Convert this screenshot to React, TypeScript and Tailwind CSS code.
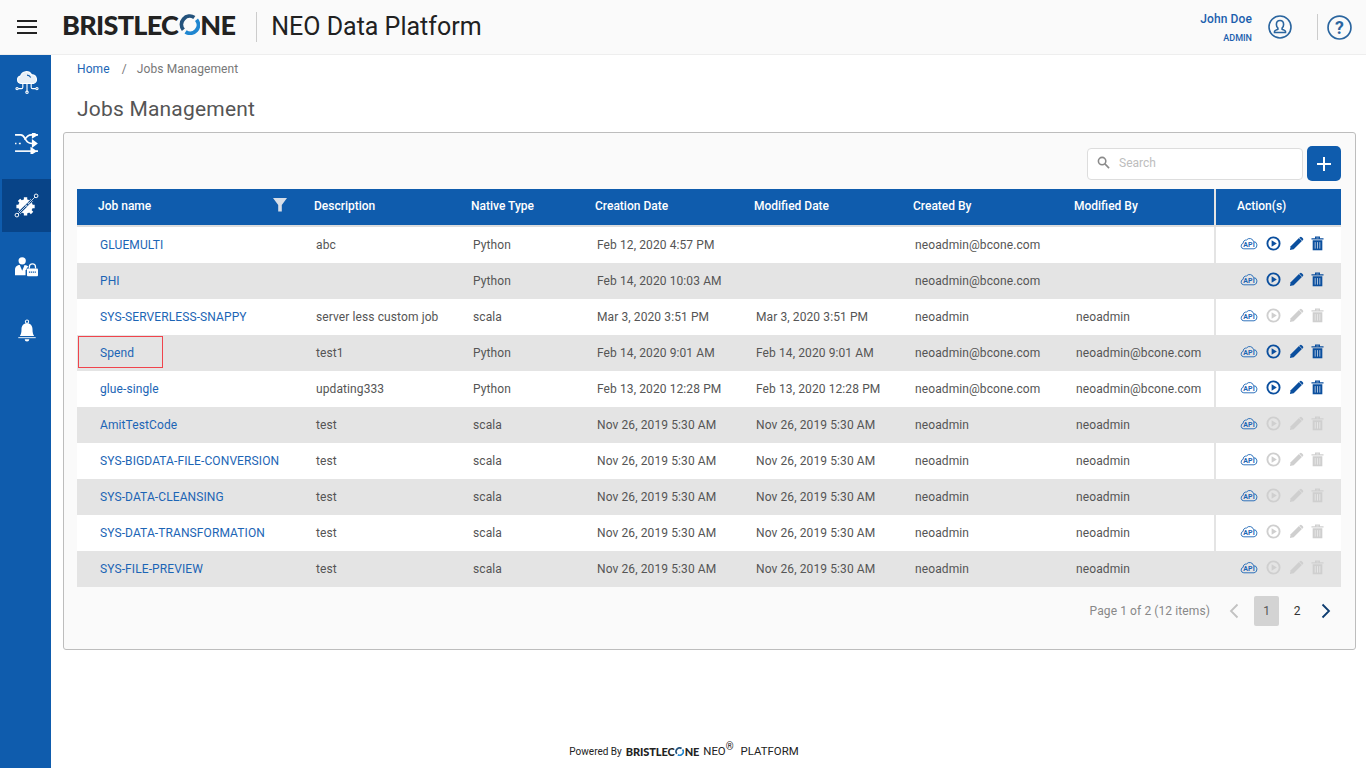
import * as React from 'react'

type Job = {
    name: string
    description: string
    type: string
    created: string
    modified: string
    createdBy: string
    modifiedBy: string
    enabled: boolean
}

const jobs: Job[] = [
    { name: 'GLUEMULTI', description: 'abc', type: 'Python', created: 'Feb 12, 2020 4:57 PM', modified: '', createdBy: 'neoadmin@bcone.com', modifiedBy: '', enabled: true },
    { name: 'PHI', description: '', type: 'Python', created: 'Feb 14, 2020 10:03 AM', modified: '', createdBy: 'neoadmin@bcone.com', modifiedBy: '', enabled: true },
    { name: 'SYS-SERVERLESS-SNAPPY', description: 'server less custom job', type: 'scala', created: 'Mar 3, 2020 3:51 PM', modified: 'Mar 3, 2020 3:51 PM', createdBy: 'neoadmin', modifiedBy: 'neoadmin', enabled: false },
    { name: 'Spend', description: 'test1', type: 'Python', created: 'Feb 14, 2020 9:01 AM', modified: 'Feb 14, 2020 9:01 AM', createdBy: 'neoadmin@bcone.com', modifiedBy: 'neoadmin@bcone.com', enabled: true },
    { name: 'glue-single', description: 'updating333', type: 'Python', created: 'Feb 13, 2020 12:28 PM', modified: 'Feb 13, 2020 12:28 PM', createdBy: 'neoadmin@bcone.com', modifiedBy: 'neoadmin@bcone.com', enabled: true },
    { name: 'AmitTestCode', description: 'test', type: 'scala', created: 'Nov 26, 2019 5:30 AM', modified: 'Nov 26, 2019 5:30 AM', createdBy: 'neoadmin', modifiedBy: 'neoadmin', enabled: false },
    { name: 'SYS-BIGDATA-FILE-CONVERSION', description: 'test', type: 'scala', created: 'Nov 26, 2019 5:30 AM', modified: 'Nov 26, 2019 5:30 AM', createdBy: 'neoadmin', modifiedBy: 'neoadmin', enabled: false },
    { name: 'SYS-DATA-CLEANSING', description: 'test', type: 'scala', created: 'Nov 26, 2019 5:30 AM', modified: 'Nov 26, 2019 5:30 AM', createdBy: 'neoadmin', modifiedBy: 'neoadmin', enabled: false },
    { name: 'SYS-DATA-TRANSFORMATION', description: 'test', type: 'scala', created: 'Nov 26, 2019 5:30 AM', modified: 'Nov 26, 2019 5:30 AM', createdBy: 'neoadmin', modifiedBy: 'neoadmin', enabled: false },
    { name: 'SYS-FILE-PREVIEW', description: 'test', type: 'scala', created: 'Nov 26, 2019 5:30 AM', modified: 'Nov 26, 2019 5:30 AM', createdBy: 'neoadmin', modifiedBy: 'neoadmin', enabled: false },
]

const gridCols = 'grid grid-cols-[216px_157px_124px_159px_159px_161px_161px_127px]'

const Logo: React.FC<{ small?: boolean }> = ({ small }) => (
    <span
        className={
            small
                ? "inline-flex items-center [font-family:Lato,sans-serif] font-black text-[11px] leading-none text-[#222] tracking-[-0.1px]"
                : "inline-flex items-center pb-[6px] [font-family:Lato,sans-serif] font-black text-[27px] leading-none text-[#222] tracking-[-0.7px]"
        }
    >
        BRISTLEC
        <svg viewBox="0 0 24 24" className={small ? 'w-[9px] h-[9px] mx-[0.5px]' : 'w-[21px] h-[21px] mx-[0.5px]'}>
            <path d="M5 18A9.500 9.500 0 0 1 17.500 4" fill="none" stroke="#23527c" strokeWidth="4.400" />
            <path d="M20 6.500A9.500 9.500 0 0 1 7.500 20.500" fill="none" stroke="#1f86d0" strokeWidth="4.400" />
        </svg>
        NE
    </span>
)

const CloudIcon = () => (
    <svg viewBox="0 0 28 28" className="w-[26px] h-[26px]" fill="none" stroke="#fff" strokeWidth="1.200">
        <path d="M7.500 14.500a4 4 0 0 1-.5-7.900A6.500 6.500 0 0 1 19 5.200a4.800 4.800 0 0 1 2 9.300z" fill="#fff" fillOpacity="0.9" />
        <path d="M14 5.500a4.500 4.500 0 0 1 4 2.500" stroke="#0f5cad" />
        <path d="M9.500 15v3.500a1.500 1.500 0 0 1-1.500 1.500H4.500M14 15v7.500M18.500 15v3.500A1.500 1.500 0 0 0 20 20h3.500" />
        <circle cx="3.300" cy="20" r="1.200" />
        <circle cx="14" cy="24" r="1.300" />
        <circle cx="24.700" cy="20" r="1.200" />
    </svg>
)

const ShuffleIcon = () => (
    <svg viewBox="0 0 24 22" className="w-[23px] h-[21px]" fill="none" stroke="#fff" strokeWidth="1.700">
        <path d="M0 2h6c3 0 4 3 5.500 5.500S15 11 18 11h2" />
        <path d="M18.500 8l4 3-4 3z" fill="#fff" />
        <path d="M10 7c2-3 3.500-5 7-5h2" />
        <path d="M18.500 -.5l4 2.500-4 2.500z" fill="#fff" />
        <path d="M0 11h1.500M4 11h2M21.500 19H24M22 2h2" />
        <path d="M0 19h18" />
        <path d="M17 16l4.500 3-4.500 3z" fill="#fff" />
    </svg>
)

const GearIcon = () => (
    <svg viewBox="0 0 26 26" className="w-[25px] h-[25px]">
        <circle cx="12" cy="14" r="7.500" fill="#fff" />
        <path d="M12 4.500v4M12 19.500v4M2.500 14h4M17.500 14h4M5.200 7.200l3 3M15.800 17.800l3 3M18.800 7.200l-3 3M8.200 17.800l-3 3" stroke="#fff" strokeWidth="3.500" />
        <path d="M4 22L22 4" stroke="#084488" strokeWidth="2.800" />
        <path d="M4 22L22 4" stroke="#dfe8f3" strokeWidth="0.900" />
        <circle cx="23" cy="3" r="1.900" fill="#084488" stroke="#fff" strokeWidth="1" />
        <circle cx="14" cy="12" r="1.800" fill="#084488" stroke="#fff" strokeWidth="1" />
        <circle cx="3" cy="23" r="1.900" fill="#084488" stroke="#fff" strokeWidth="1" />
    </svg>
)

const UserLockIcon = () => (
    <svg viewBox="0 0 26 24" className="w-[25px] h-[23px]" fill="#fff">
        <circle cx="8.500" cy="5" r="3.800" />
        <path d="M1 20v-5.500C1 11 3.500 9.700 6 9.500l2.500 6 2.500-6c1.500.1 3 .6 4 1.700-1.300.7-2 1.800-2.200 3.300H12V20z" />
        <path d="M16 13v-1.500a3.200 3.200 0 0 1 6.400 0V13" fill="none" stroke="#fff" strokeWidth="1.300" />
        <rect x="13.500" y="13" width="11.500" height="8" rx="1" />
        <path d="M15.500 16.800h7.500" stroke="#0f5cad" strokeWidth="1.200" strokeDasharray="1.300 .7" />
    </svg>
)

const BellIcon = () => (
    <svg viewBox="0 0 24 26" className="w-[22px] h-[24px]" fill="#fff">
        <circle cx="12" cy="2.800" r="1.800" fill="none" stroke="#fff" strokeWidth="1.100" />
        <path d="M12 4.500c-4 0-6 3-6 6.500 0 3.500-.6 5.500-1.800 7.500h15.600C18.600 16.500 18 14.500 18 11c0-3.500-2-6.500-6-6.500z" />
        <path d="M2.500 19.800h19v1h-19z" />
        <path d="M9.500 22h5a2.500 2.500 0 0 1-5 0z" />
    </svg>
)

const SideItem: React.FC<{ active?: boolean; children: React.ReactNode }> = ({ active, children }) => (
    <div className={`h-[53px] ml-[2px] flex items-center justify-center ${active ? 'bg-[#084488]' : ''}`}>
        {children}
    </div>
)

const ApiIcon = () => (
    <svg viewBox="0 0 18 14" className="w-[18px] h-[14px]" fill="none" stroke="#1c65b5" strokeWidth="0.900">
        <path d="M3.800 12.800a2.800 2.800 0 0 1-.6-5.500 3 3 0 0 1 3.300-3.300A4 4 0 0 1 13.500 5.500a3.700 3.700 0 0 1 .6 7.300z" />
        <text x="9" y="11" textAnchor="middle" fontSize="7" fontWeight="700" fill="#1c65b5" stroke="none" fontFamily="Roboto, sans-serif">API</text>
    </svg>
)

const ActionIcons: React.FC<{ enabled: boolean }> = ({ enabled }) => {
    const color = enabled ? '#0b4f9e' : '#cfcfcf'
    return (
        <div className="flex items-center pl-[24px] -mt-[4px]">
            <ApiIcon />
            <svg viewBox="0 0 16 16" className="w-[15px] h-[15px] ml-[8px]">
                <circle cx="8" cy="8" r="6.500" fill="none" stroke={color} strokeWidth="2" />
                <path d="M6 4.600v6.800L11.500 8z" fill={color} />
            </svg>
            <svg viewBox="0 0 16 16" className="w-[15px] h-[15px] ml-[8px]">
                <path d="M1 15l.8-4L10.600 2.200l3.200 3.200L5 14.200z" fill={color} />
                <path d="M11.600 1.200a1.400 1.400 0 0 1 2 0l1.200 1.200a1.400 1.400 0 0 1 0 2l-.6.600-3.200-3.200z" fill={color} />
            </svg>
            <svg viewBox="0 0 14 16" className="w-[13px] h-[15px] ml-[7px]">
                <path d="M.5 3h13M5 3V1.200h4V3" fill="none" stroke={color} strokeWidth="1.400" />
                <path d="M1.800 4.500h10.400V15.300H1.800z" fill={color} />
                <path d="M4.500 6.500v7M7 6.500v7M9.500 6.500v7" stroke={enabled ? '#dbe6f2' : '#eeeeee'} strokeWidth="0.800" />
            </svg>
        </div>
    )
}

const Row: React.FC<{ job: Job; odd: boolean }> = ({ job, odd }) => (
    <div className={`relative ${gridCols} h-[36px] items-center text-[12px] tracking-[0.1px] text-[#555] ${odd ? 'bg-[#e4e4e4]' : 'bg-white'}`}>
        <div className="pl-[23px] text-[#1c65b5] whitespace-nowrap">{job.name}</div>
        <div className="pl-[23px] whitespace-nowrap">{job.description}</div>
        <div className="pl-[23px]">{job.type}</div>
        <div className="pl-[23px] whitespace-nowrap">{job.created}</div>
        <div className="pl-[23px] whitespace-nowrap">{job.modified}</div>
        <div className="pl-[23px]">{job.createdBy}</div>
        <div className="pl-[23px] whitespace-nowrap">{job.modifiedBy}</div>
        <div className="h-full flex items-center border-l-2 border-[#e4e4e4]">
            <ActionIcons enabled={job.enabled} />
        </div>
        {job.name === 'Spend' && (
            <div className="absolute left-[1px] top-[1px] w-[85px] h-[32px] border border-[#f0444c]" />
        )}
    </div>
)

export default function App() {
    return (
        <div className="h-screen flex flex-col bg-white [font-family:Roboto,sans-serif] overflow-hidden">
            <header className="h-[55px] shrink-0 flex items-center bg-[#fafafa] border-b border-[#eeeeee]">
                <div className="w-[62px] pl-[17px] shrink-0">
                    <div className="w-[20px] flex flex-col gap-[4px]">
                        <div className="h-[2px] bg-[#222]" />
                        <div className="h-[2px] bg-[#222]" />
                        <div className="h-[2px] bg-[#222]" />
                    </div>
                </div>
                <Logo />
                <div className="w-px h-[30px] bg-[#cccccc] ml-[21px] mr-[14px]" />
                <div className="text-[25px] text-[#212121]">NEO Data Platform</div>
                <div className="ml-auto flex items-center pr-[14px]">
                    <div className="text-right text-[#1c5fae]">
                        <div className="text-[12px] font-medium leading-[14px] tracking-[0.1px]">John Doe</div>
                        <div className="text-[9px] font-medium leading-[10px] mt-[7px]">ADMIN</div>
                    </div>
                    <svg viewBox="0 0 24 24" className="w-[24px] h-[24px] ml-[16px]" fill="none" stroke="#2a659f" strokeWidth="1.600">
                        <circle cx="12" cy="12" r="11" />
                        <path d="M12 5.500c-2.400 0-3.600 1.800-3.600 3.900 0 1.600.6 2.800 1.500 3.600v1.300c-1.500.7-3.400 1-3.400 2.200v1h11v-1c0-1.200-1.900-1.500-3.400-2.200V13c.9-.8 1.500-2 1.500-3.600 0-2.100-1.200-3.900-3.600-3.900z" />
                    </svg>
                    <div className="w-px h-[26px] bg-[#cccccc] ml-[25px] mr-[9px]" />
                    <svg viewBox="0 0 24 24" className="w-[25px] h-[25px]" fill="none" stroke="#2a659f" strokeWidth="1.600">
                        <circle cx="12" cy="12" r="11" />
                        <text x="12" y="18" textAnchor="middle" fontSize="17" fontWeight="700" fill="#2a659f" stroke="none" fontFamily="Roboto, sans-serif">?</text>
                    </svg>
                </div>
            </header>
            <div className="flex-1 flex min-h-0">
                <aside className="w-[51px] shrink-0 bg-[#0f5cad] pt-[1px]">
                    <SideItem><CloudIcon /></SideItem>
                    <div className="h-[8px]" />
                    <SideItem><ShuffleIcon /></SideItem>
                    <div className="h-[9px]" />
                    <SideItem active><GearIcon /></SideItem>
                    <div className="h-[9px]" />
                    <SideItem><UserLockIcon /></SideItem>
                    <div className="h-[10px]" />
                    <SideItem><BellIcon /></SideItem>
                </aside>
                <main className="flex-1 min-w-0 flex flex-col pl-[12px] pr-[10px]">
                    <div className="pl-[14px] pt-[7px] flex items-center text-[12px] leading-[14px] tracking-[0.1px]">
                        <span className="text-[#1c65b5]">Home</span>
                        <span className="text-[#777] ml-[12px]">/</span>
                        <span className="text-[#777] ml-[10px]">Jobs Management</span>
                    </div>
                    <h1 className="pl-[14px] mt-[20px] text-[21px] leading-[26px] text-[#555] font-normal tracking-[0.2px]">Jobs Management</h1>
                    <section className="mt-[10px] h-[518px] bg-[#fafafa] border border-[#bdbdbd] rounded-[3px] pl-[13px] pr-[14px] pt-[13px]">
                        <div className="flex justify-end items-center h-[35px] gap-[4px]">
                            <div className="w-[216px] h-[32px] bg-white border border-[#dddddd] rounded-[4px] flex items-center pl-[9px] pb-[2px]">
                                <svg viewBox="0 0 14 14" className="w-[13px] h-[13px]" fill="none" stroke="#8a8a8a" strokeWidth="1.700">
                                    <circle cx="5.500" cy="5.500" r="4" />
                                    <path d="M8.500 8.500l4.500 4.500" />
                                </svg>
                                <span className="ml-[9px] text-[12px] text-[#bdbdbd]">Search</span>
                            </div>
                            <div className="w-[34px] h-[35px] bg-[#0f5cad] rounded-[5px] flex items-center justify-center">
                                <svg viewBox="0 0 14 14" className="w-[14px] h-[14px]" stroke="#fff" strokeWidth="2">
                                    <path d="M7 0v14M0 7h14" />
                                </svg>
                            </div>
                        </div>
                        <div className={`${gridCols} mt-[8px] h-[36px] items-center bg-[#0f5cad] text-white text-[12px] font-medium`}>
                            <div className="pl-[21px] pb-[2px] flex items-center justify-between pr-[6px]">
                                <span>Job name</span>
                                <svg viewBox="0 0 14 14" className="w-[14px] h-[14px] -mt-[3px]" fill="#d7dee8">
                                    <path d="M0 0h14L8.800 7v6.500H5.200V7z" />
                                </svg>
                            </div>
                            <div className="pl-[21px] pb-[2px]">Description</div>
                            <div className="pl-[21px] pb-[2px]">Native Type</div>
                            <div className="pl-[21px] pb-[2px]">Creation Date</div>
                            <div className="pl-[21px] pb-[2px]">Modified Date</div>
                            <div className="pl-[21px] pb-[2px]">Created By</div>
                            <div className="pl-[21px] pb-[2px]">Modified By</div>
                            <div className="h-full flex items-center pl-[21px] pb-[2px] border-l-2 border-[#e4e4e4]">Action(s)</div>
                        </div>
                        <div className="h-[2px] bg-[#dddddd]" />
                        {jobs.map((job, i) => (
                            <Row key={job.name} job={job} odd={i % 2 === 1} />
                        ))}
                        <div className="flex justify-end items-center mt-[9px] h-[30px] text-[12px] text-[#888]">
                            <span className="tracking-[0.1px]">Page 1 of 2 (12 items)</span>
                            <svg viewBox="0 0 10 16" className="w-[10px] h-[16px] ml-[19px]" fill="none" stroke="#c2c2c2" strokeWidth="1.800">
                                <path d="M8.500 1.500L2 8l6.500 6.500" />
                            </svg>
                            <div className="w-[25px] h-[30px] ml-[15px] rounded-[2px] bg-[#d3d3d3] flex items-center justify-center text-[#555]">1</div>
                            <div className="w-[36px] text-center text-[#333]">2</div>
                            <svg viewBox="0 0 10 16" className="w-[10px] h-[16px] ml-[6px] mr-[10px]" fill="none" stroke="#0d3c70" strokeWidth="1.800">
                                <path d="M1.500 1.500L8 8l-6.500 6.500" />
                            </svg>
                        </div>
                    </section>
                    <footer className="mt-auto mb-[8px] pr-[51px] flex justify-center items-center [font-family:'Liberation_Sans',sans-serif] text-[#222]">
                        <span className="text-[10px] mr-[4px]">Powered By</span>
                        <Logo small />
                        <span className="text-[11.400px] ml-[4px]">NEO</span>
                        <span className="text-[10px] leading-none -translate-y-[4px] mr-[7px]">®</span>
                        <span className="text-[11.400px]">PLATFORM</span>
                    </footer>
                </main>
            </div>
        </div>
    )
}
